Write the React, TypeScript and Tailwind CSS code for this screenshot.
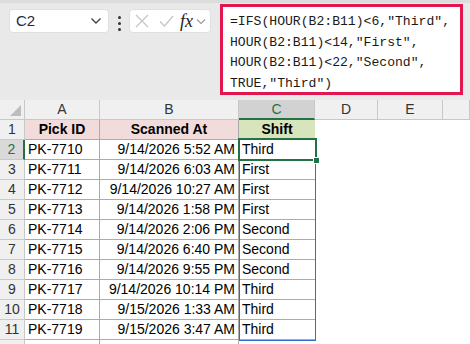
import React from "react";

const rows: [string, string, string][] = [
  ["PK-7710", "9/14/2026 5:52 AM", "Third"],
  ["PK-7711", "9/14/2026 6:03 AM", "First"],
  ["PK-7712", "9/14/2026 10:27 AM", "First"],
  ["PK-7713", "9/14/2026 1:58 PM", "First"],
  ["PK-7714", "9/14/2026 2:06 PM", "Second"],
  ["PK-7715", "9/14/2026 6:40 PM", "Second"],
  ["PK-7716", "9/14/2026 9:55 PM", "Second"],
  ["PK-7717", "9/14/2026 10:14 PM", "Third"],
  ["PK-7718", "9/15/2026 1:33 AM", "Third"],
  ["PK-7719", "9/15/2026 3:47 AM", "Third"],
];

const font = { fontFamily: "'Liberation Sans', Arial, sans-serif" };

export default function App() {
  return (
    <div className="relative w-[470px] h-[344px] overflow-hidden bg-white" style={font}>
      {/* toolbar */}
      <div className="h-[100px] bg-[#e9e9e9] border-t-[3px] border-[#dcdcdc] flex items-start">
        <div className="mt-[6px] ml-[9px] w-[100px] h-[24px] bg-white rounded-[4px] flex items-center justify-between pl-[6px] pr-[6px] border border-[#e0e0e0]">
          <span className="text-[15px] text-[#1f2a44]">C2</span>
          <svg width="12" height="8" viewBox="0 0 12 8"><path d="M1.5 1.5 L6 6 L10.5 1.5" fill="none" stroke="#444" strokeWidth="1.4" /></svg>
        </div>
        <div className="mt-[13px] ml-[9px] flex flex-col gap-[3px]">
          <div className="w-[3px] h-[3px] bg-[#333] rounded-full" />
          <div className="w-[3px] h-[3px] bg-[#333] rounded-full" />
          <div className="w-[3px] h-[3px] bg-[#333] rounded-full" />
        </div>
        <div className="mt-[6px] ml-[8px] w-[82px] h-[24px] bg-white rounded-[4px] flex items-center border border-[#e0e0e0]">
          <svg className="ml-[5px]" width="14" height="14" viewBox="0 0 14 14"><path d="M1 1 L13 13 M13 1 L1 13" stroke="#c6c6c6" strokeWidth="1.3" fill="none" /></svg>
          <svg className="ml-[10px]" width="15" height="14" viewBox="0 0 15 14"><path d="M1 7.5 L5.5 12 L14 2" stroke="#c6c6c6" strokeWidth="1.3" fill="none" /></svg>
          <span className="ml-[6px] text-[18px] italic text-[#222] leading-none" style={{ fontFamily: "'Liberation Serif', serif" }}>fx</span>
          <svg className="ml-[3px]" width="10" height="7" viewBox="0 0 10 7"><path d="M1 1.5 L5 5.5 L9 1.5" fill="none" stroke="#9a9a9a" strokeWidth="1.1" /></svg>
        </div>
        <div className="mt-[1px] ml-[9px] w-[243px] h-[91px] bg-white border-[3px] border-[#e3174f] pl-[7px] pt-[5px]">
          <div className="text-[13.1px] leading-[20.5px] text-[#1a1a1a] whitespace-pre" style={{ fontFamily: "'Liberation Mono', monospace" }}>
            <div>=IFS(HOUR(B2:B11)&lt;6,"Third",</div>
            <div>HOUR(B2:B11)&lt;14,"First",</div>
            <div>HOUR(B2:B11)&lt;22,"Second",</div>
            <div>TRUE,"Third")</div>
          </div>
        </div>
      </div>

      {/* grid */}
      <div className="grid grid-cols-[25px_75px_139px_76px_63px_65px_1fr] auto-rows-[20px] text-[14px] text-black">
        {/* header row */}
        <div className="relative bg-[#f0f0f0] border-r border-b border-[#c8c8c8]">
          <svg className="absolute right-[3px] bottom-[3px]" width="11" height="11" viewBox="0 0 11 11"><path d="M11 0 L11 11 L0 11 Z" fill="#bdbdbd" /></svg>
        </div>
        {["A", "B"].map((c) => (
          <div key={c} className="bg-[#f0f0f0] border-r border-b border-[#c8c8c8] flex items-center justify-center text-[#333]">{c}</div>
        ))}
        <div className="bg-[#d2d2d2] border-r border-[#c8c8c8] border-b-2 border-b-[#217346] flex items-center justify-center text-[#217346]">C</div>
        {["D", "E", ""].map((c, i) => (
          <div key={i} className="bg-[#f0f0f0] border-r border-b border-[#c8c8c8] flex items-center justify-center text-[#333]">{c}</div>
        ))}

        {/* row 1 */}
        <div className="bg-[#f0f0f0] border-r border-b border-[#c8c8c8] flex items-center justify-center text-[#333]">1</div>
        <div className="bg-[#f2dcdb] border-r border-b border-[#ababab] flex items-center justify-center font-bold">Pick ID</div>
        <div className="bg-[#f2dcdb] border-r border-b border-[#ababab] flex items-center justify-center font-bold">Scanned At</div>
        <div className="bg-[#d8e4bc] border-b border-[#ababab] flex items-center justify-center font-bold">Shift</div>
        <div />
        <div />
        <div />

        {rows.map((r, i) => {
          const n = i + 2;
          const sel = n === 2;
          return (
            <React.Fragment key={n}>
              <div className={sel ? "bg-[#d9d9d9] border-r-2 border-r-[#217346] border-b border-b-[#c8c8c8] flex items-center justify-center text-[#217346]" : "bg-[#f0f0f0] border-r border-b border-[#c8c8c8] flex items-center justify-center text-[#333]"}>{n}</div>
              <div className="border-r border-b border-[#ababab] flex items-center pl-[3px]">{r[0]}</div>
              <div className="border-r border-b border-[#ababab] flex items-center justify-end pr-[3px]">{r[1]}</div>
              <div className="border-b border-[#ababab] flex items-center pl-[3px]">{r[2]}</div>
              <div />
              <div />
              <div />
            </React.Fragment>
          );
        })}
        <div className="bg-[#f0f0f0] border-r border-[#c8c8c8]" />
        <div className="border-r border-[#ababab]" />
        <div className="border-r border-[#ababab]" />
        <div />
        <div />
        <div />
        <div />
      </div>

      {/* selection range overlay */}
      <div className="absolute left-[239px] top-[139px] w-[77px] h-[202px] border border-[#3569d4] pointer-events-none" />
      {/* active cell */}
      <div className="absolute left-[238px] top-[138px] w-[79px] h-[23px] border-2 border-[#217346] pointer-events-none" />
      <div className="absolute left-[313px] top-[157px] w-[7px] h-[7px] bg-[#217346] border border-white pointer-events-none" />
    </div>
  );
}
